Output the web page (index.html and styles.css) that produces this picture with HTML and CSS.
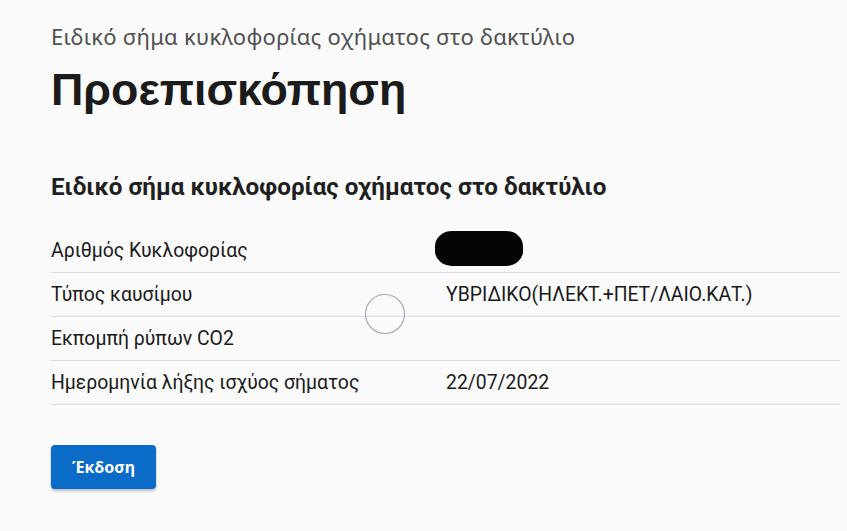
FILE: index.html
```html
<!DOCTYPE html>
<html lang="el">
<head>
<meta charset="utf-8">
<title>Προεπισκόπηση</title>
<link rel="stylesheet" href="styles.css">
</head>
<body>
<main class="page">
  <p class="caption">Ειδικό σήμα κυκλοφορίας οχήματος στο δακτύλιο</p>
  <h1 class="title">Προεπισκόπηση</h1>
  <h2 class="section-title">Ειδικό σήμα κυκλοφορίας οχήματος στο δακτύλιο</h2>
  <dl class="summary">
    <div class="row">
      <dt class="key">Αριθμός Κυκλοφορίας</dt>
      <dd class="value"><span class="redacted"></span></dd>
    </div>
    <div class="row">
      <dt class="key">Τύπος καυσίμου</dt>
      <dd class="value">ΥΒΡΙΔΙΚΟ(ΗΛΕΚΤ.+ΠΕΤ/ΛΑΙΟ.ΚΑΤ.)</dd>
    </div>
    <div class="row">
      <dt class="key">Εκπομπή ρύπων CO2</dt>
      <dd class="value"></dd>
    </div>
    <div class="row">
      <dt class="key">Ημερομηνία λήξης ισχύος σήματος</dt>
      <dd class="value">22/07/2022</dd>
    </div>
  </dl>
  <button class="btn" type="button">Έκδοση</button>
</main>
<svg class="cursor-ring" width="42" height="42" viewBox="0 0 42 42" aria-hidden="true">
  <circle cx="21" cy="21" r="19.5" fill="none" stroke="#a9a9b8" stroke-width="1.2"/>
</svg>
</body>
</html>
```
FILE: styles.css
```css
html, body {
  margin: 0;
  padding: 0;
}
body {
  background: #fafafa;
  color: #1f1f1f;
  font-family: Roboto, "Noto Sans", sans-serif;
  position: relative;
  min-height: 531px;
  overflow: hidden;
}
.page {
  padding: 21px 7px 0 51px;
}
.caption {
  margin: 0;
  font-family: "Noto Sans", "Open Sans", sans-serif;
  font-size: 22px;
  letter-spacing: 0.25px;
  line-height: 30px;
  color: #505050;
}
.title {
  margin: 10px 0 0;
  font-family: "Liberation Sans", Arial, sans-serif;
  font-weight: 700;
  font-size: 44.8px;
  line-height: 56px;
  color: #1b1b1b;
}
.section-title {
  margin: 55px 0 0;
  font-family: Roboto, sans-serif;
  font-weight: 700;
  font-size: 24.2px;
  line-height: 30px;
  color: #1f1f1f;
}
.summary {
  margin: 27px 0 0;
}
.row {
  display: grid;
  grid-template-columns: 395px 1fr;
  height: 44px;
  align-items: center;
  border-bottom: 1px solid #dcdcdc;
  box-sizing: border-box;
}
.key, .value {
  margin: 0;
  font-size: 19.4px;
  line-height: 22px;
  color: #1a1a1a;
}
.redacted {
  display: block;
  width: 88px;
  height: 35px;
  margin: -4px 0 0 -11px;
  background: #050505;
  border-radius: 17px / 15px;
}
.btn {
  margin-top: 40px;
  width: 105px;
  height: 44px;
  border: 0;
  border-radius: 4px;
  background: #0b6bc8;
  color: #fff;
  font-family: "Noto Sans", "Open Sans", sans-serif;
  font-weight: 700;
  font-size: 16px;
  box-shadow: 0 2px 3px rgba(0, 0, 0, 0.25);
  cursor: pointer;
}
.cursor-ring {
  position: absolute;
  left: 364px;
  top: 293px;
}
```
